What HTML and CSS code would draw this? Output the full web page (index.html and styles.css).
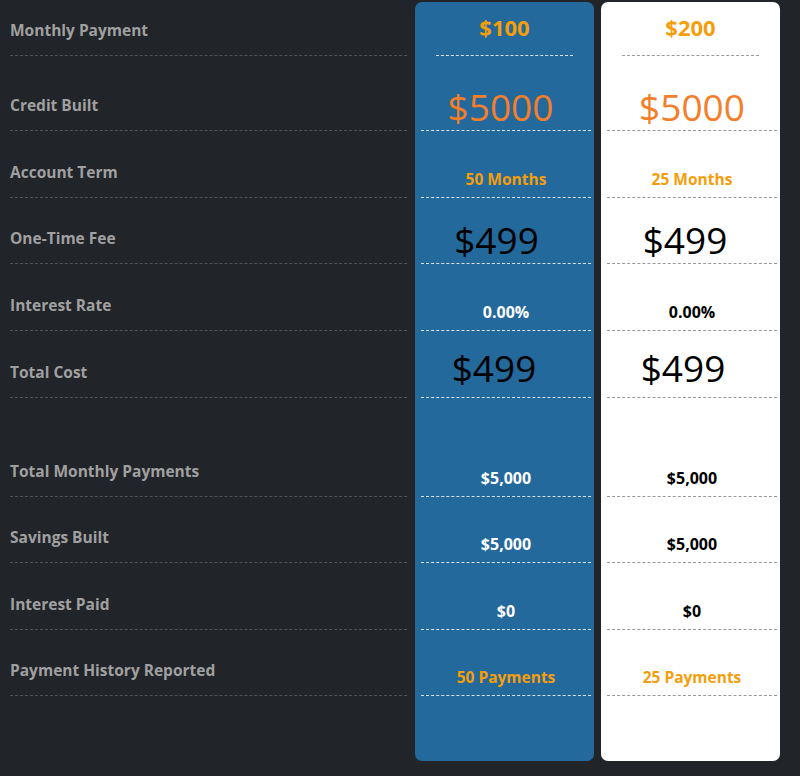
FILE: index.html
```html
<!DOCTYPE html>
<html>
<head>
<meta charset="utf-8">
<link rel="stylesheet" href="styles.css">
</head>
<body>
<div class="table">
  <div class="labels">
    <div class="lbl r1">Monthly Payment</div>
    <div class="lbl r2">Credit Built</div>
    <div class="lbl r3">Account Term</div>
    <div class="lbl r4">One-Time Fee</div>
    <div class="lbl r5">Interest Rate</div>
    <div class="lbl r6">Total Cost</div>
    <div class="spacer"></div>
    <div class="lbl r7">Total Monthly Payments</div>
    <div class="lbl r8">Savings Built</div>
    <div class="lbl r9">Interest Paid</div>
    <div class="lbl r10">Payment History Reported</div>
  </div>

  <div class="plan plan-blue">
    <div class="cell r1 head"><span class="price">$100</span></div>
    <div class="cell r2 big credit-blue"><span class="credit">$5000</span></div>
    <div class="cell r3 small"><span class="accent">50 Months</span></div>
    <div class="cell r4 big fee-blue"><span class="amount">$499</span></div>
    <div class="cell r5 small"><span class="strong">0.00%</span></div>
    <div class="cell r6 big total total-blue"><span class="amount">$499</span></div>
    <div class="spacer"></div>
    <div class="cell r7 small"><span class="strong">$5,000</span></div>
    <div class="cell r8 small"><span class="strong">$5,000</span></div>
    <div class="cell r9 small"><span class="strong">$0</span></div>
    <div class="cell r10 small"><span class="accent">50 Payments</span></div>
  </div>

  <div class="plan plan-white">
    <div class="cell r1 head"><span class="price">$200</span></div>
    <div class="cell r2 big"><span class="credit">$5000</span></div>
    <div class="cell r3 small"><span class="accent">25 Months</span></div>
    <div class="cell r4 big fee-white"><span class="amount">$499</span></div>
    <div class="cell r5 small"><span class="strong">0.00%</span></div>
    <div class="cell r6 big total total-white"><span class="amount">$499</span></div>
    <div class="spacer"></div>
    <div class="cell r7 small"><span class="strong">$5,000</span></div>
    <div class="cell r8 small"><span class="strong">$5,000</span></div>
    <div class="cell r9 small"><span class="strong">$0</span></div>
    <div class="cell r10 small"><span class="accent">25 Payments</span></div>
  </div>
</div>
</body>
</html>
```

FILE: styles.css
```css
html, body {
  margin: 0;
  padding: 0;
  background: #212428;
  height: 776px;
  overflow: hidden;
}

.table {
  display: flex;
  gap: 7px;
  padding: 0 20px 0 10px;
  font-family: "Open Sans", "Noto Sans", sans-serif;
}

.labels {
  flex: 1;
  display: flex;
  flex-direction: column;
  margin-right: 1px;
}

.lbl {
  display: flex;
  align-items: flex-end;
  padding-bottom: 14px;
  box-sizing: border-box;
  border-bottom: 1px dashed #4f5357;
  color: #a0a0a0;
  font-weight: 700;
  font-size: 15.5px;
  line-height: 21px;
}

.r1 { height: 56px; }
.r2 { height: 75px; }
.r3 { height: 67px; }
.r4 { height: 66px; }
.r5 { height: 67px; }
.r6 { height: 67px; }
.spacer { height: 33px; }
.r7 { height: 66px; }
.r8 { height: 66px; }
.r9 { height: 67px; }
.r10 { height: 66px; }

.plan {
  width: 179px;
  margin-top: 2px;
  height: 759px;
  border-radius: 7px;
  display: flex;
  flex-direction: column;
  box-sizing: border-box;
}

.plan .r1 { height: 54px; }

.plan-blue { background: #23699b; }
.plan-white { background: #ffffff; }

.cell {
  display: flex;
  align-items: flex-end;
  justify-content: center;
  box-sizing: border-box;
  margin: 0 3px 0 6px;
  border-bottom: 1px dashed #d9e3ec;
}

.plan-white .cell { border-bottom-color: #9a9a9a; }

.cell.head {
  margin: 0 21px 0 21px;
  padding-bottom: 14px;
}

.price {
  color: #f59e0b;
  font-weight: 700;
  font-size: 22px;
  line-height: 28px;
}

.big { padding-bottom: 3px; }
.big.total { padding-bottom: 9px; }
.small { padding-bottom: 8px; }

.credit {
  color: #f47e2a;
  font-size: 37px;
  line-height: 40px;
}

.amount {
  color: #000000;
  font-size: 37px;
  line-height: 40px;
}

.credit-blue { padding-right: 11px; }
.fee-blue { padding-right: 19px; }
.fee-white { padding-right: 14px; }
.total-blue { padding-right: 24px; }
.total-white { padding-right: 18px; }

.accent {
  color: #f59e0b;
  font-weight: 700;
  font-size: 15.5px;
  line-height: 20px;
}

.strong {
  font-weight: 700;
  font-size: 16px;
  line-height: 20px;
}

.plan-blue .strong { color: #ffffff; }
.plan-white .strong { color: #000000; }
```
